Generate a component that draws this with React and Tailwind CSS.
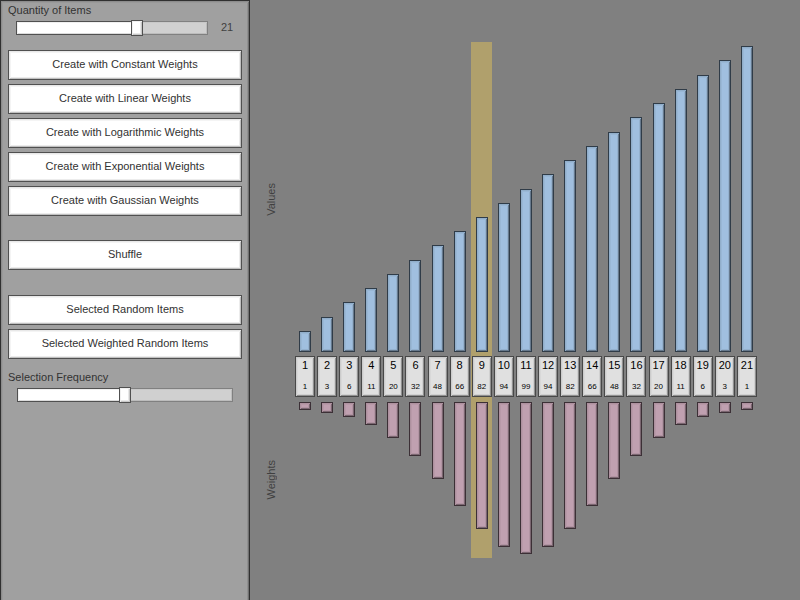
import { useState } from "react";

const WEIGHTS = [1, 3, 6, 11, 20, 32, 48, 66, 82, 94, 99, 94, 82, 66, 48, 32, 20, 11, 6, 3, 1];
const SELECTED = 9;

const CREATE_ACTIONS = [
  "Create with Constant Weights",
  "Create with Linear Weights",
  "Create with Logarithmic Weights",
  "Create with Exponential Weights",
  "Create with Gaussian Weights",
];

function PanelButton({ children }) {
  return (
    <button
      type="button"
      className="h-[30px] w-full border border-[#505050] bg-white pb-0.5 text-[11px] leading-4 text-[#323232] shadow-[inset_1px_1px_0_#e8e8e8,inset_-1px_-1px_0_#c0c0c0,inset_2px_2px_0_#f4f4f4,inset_-2px_-2px_0_#ececec]"
    >
      {children}
    </button>
  );
}

function Slider({ id, min, max, value, onChange }) {
  const filled = ((value - min) / (max - min)) * 100;
  return (
    <div className="grid h-4 flex-1 items-center">
      <div className="col-start-1 row-start-1 h-[14px] border border-[#808080] bg-[#d0d0d0] shadow-[inset_1px_1px_0_#c8c8c8,inset_-1px_-1px_0_#bcbcbc]" />
      <div
        className="col-start-1 row-start-1 h-[14px] border border-[#505050] bg-white shadow-[inset_1px_1px_0_#f0f0f0,inset_-1px_-1px_0_#dcdcdc]"
        style={{ width: `${filled}%` }}
      />
      <input
        id={id}
        type="range"
        min={min}
        max={max}
        value={value}
        onChange={(e) => onChange(Number(e.target.value))}
        className="z-10 col-start-1 row-start-1 h-4 w-full appearance-none bg-transparent [&::-webkit-slider-thumb]:h-4 [&::-webkit-slider-thumb]:w-[12px] [&::-webkit-slider-thumb]:appearance-none [&::-webkit-slider-thumb]:border [&::-webkit-slider-thumb]:border-[#505050] [&::-webkit-slider-thumb]:bg-white [&::-webkit-slider-thumb]:shadow-[inset_1px_1px_0_#f0f0f0,inset_-1px_-1px_0_#c8c8c8,inset_-2px_-2px_0_#e8e8e8]"
      />
    </div>
  );
}

function Column({ number, weight, selected }) {
  const valueHeight = Math.round(21.06 + 14.24 * (number - 1));
  const weightHeight = Math.round(6.5 + 1.47 * weight);
  return (
    <li className="relative flex flex-col">
      {selected && <div className="absolute inset-y-0 right-0 -left-px bg-[#b0a06c]" />}
      <div className="relative flex h-[310px] items-end pl-1">
        <div
          className="w-3 border border-[#303c48] bg-[#a0bfdf] shadow-[inset_1px_1px_0_#91aeca,inset_-1px_-1px_0_#66798d,inset_2px_2px_0_#99b7d5,inset_-2px_-2px_0_#94b1ce]"
          style={{ height: valueHeight }}
        />
      </div>
      <div className="relative mt-1 mb-[5px] flex h-[41px] w-5 flex-col items-center border border-[#484848] bg-[#e0e0e0] pt-px text-black shadow-[inset_1px_1px_0_#cccccc,inset_-1px_-1px_0_#909090,inset_2px_2px_0_#d8d8d8,inset_-2px_-2px_0_#d0d0d0]">
        <span className="text-[11px] leading-[14px]">{number}</span>
        <span className="mt-[10px] text-[8px] leading-[10px]">{weight}</span>
      </div>
      <div className="relative h-[156px] pl-1">
        <div
          className="w-3 border border-[#3c3036] bg-[#c0a0b0] shadow-[inset_1px_1px_0_#ae919f,inset_-1px_-1px_0_#7a6670,inset_2px_2px_0_#b899a8,inset_-2px_-2px_0_#b294a3]"
          style={{ height: weightHeight }}
        />
      </div>
    </li>
  );
}

export default function App() {
  const [quantity, setQuantity] = useState(21);
  const [frequency, setFrequency] = useState(50);

  return (
    <div className="flex min-h-screen bg-[#808080] font-['Liberation_Sans',Arial,sans-serif] text-[11px] leading-4 text-[#323232]">
      <aside className="w-[250px] shrink-0 border border-[#303030] bg-[#a0a0a0] px-[7px] pt-px shadow-[inset_1px_1px_0_#8c8c8c,inset_-1px_-1px_0_#707070,inset_2px_2px_0_#999999,inset_-2px_-2px_0_#909090]">
        <label htmlFor="quantity" className="block">
          Quantity of Items
        </label>
        <div className="mt-0.5 flex pl-2">
          <Slider id="quantity" min={0} max={33} value={quantity} onChange={setQuantity} />
          <output htmlFor="quantity" className="w-[34px] pl-[13px] leading-[14px] text-[#404040]">
            {quantity}
          </output>
        </div>

        <div className="mt-[14px] flex flex-col gap-1">
          {CREATE_ACTIONS.map((label) => (
            <PanelButton key={label}>{label}</PanelButton>
          ))}
        </div>
        <div className="mt-6">
          <PanelButton>Shuffle</PanelButton>
        </div>
        <div className="mt-[25px] flex flex-col gap-1">
          <PanelButton>Selected Random Items</PanelButton>
          <PanelButton>Selected Weighted Random Items</PanelButton>
        </div>

        <label htmlFor="frequency" className="mt-[10px] block">
          Selection Frequency
        </label>
        <div className="mt-0.5 flex px-[9px]">
          <Slider id="frequency" min={0} max={100} value={frequency} onChange={setFrequency} />
        </div>
      </aside>

      <main className="flex min-w-0 flex-1 pt-[42px] pr-[43px] pl-[13px]">
        <div className="flex w-8 shrink-0 flex-col text-[#404040]">
          <h2 className="flex h-[314px] items-center justify-center self-start">
            <span className="rotate-180 [writing-mode:vertical-rl]">Values</span>
          </h2>
          <h2 className="flex h-[248px] items-center justify-center self-start">
            <span className="rotate-180 [writing-mode:vertical-rl]">Weights</span>
          </h2>
        </div>
        <ol className="grid flex-1 grid-cols-[repeat(21,minmax(0,1fr))] gap-0.5 self-start">
          {WEIGHTS.map((weight, i) => (
            <Column key={i} number={i + 1} weight={weight} selected={i + 1 === SELECTED} />
          ))}
        </ol>
      </main>
    </div>
  );
}
